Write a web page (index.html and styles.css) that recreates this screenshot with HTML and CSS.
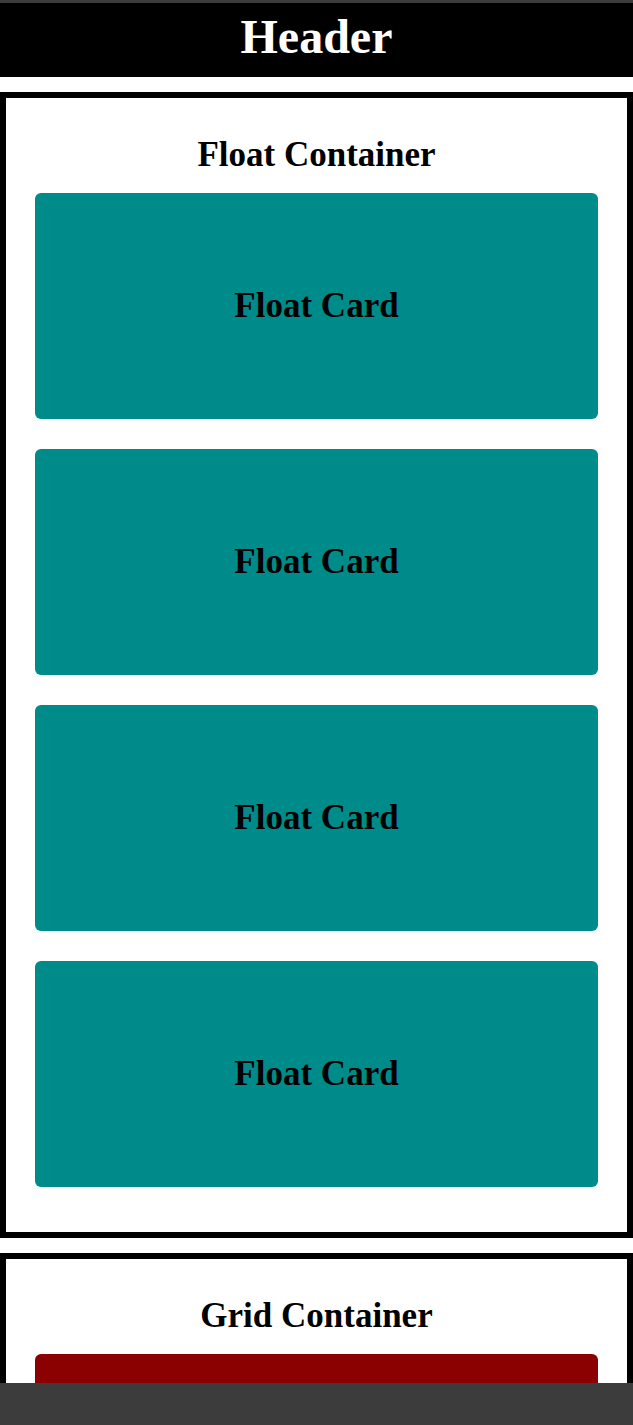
FILE: index.html
```html
<!DOCTYPE html>
<html lang="en">
<head>
<meta charset="utf-8">
<title>Layout</title>
<link rel="stylesheet" href="styles.css">
</head>
<body>
<div class="topbar"></div>
<header class="header"><h1 class="header-title">Header</h1></header>
<section class="box float-box">
  <h2 class="box-title">Float Container</h2>
  <div class="card teal">Float Card</div>
  <div class="card teal">Float Card</div>
  <div class="card teal">Float Card</div>
  <div class="card teal">Float Card</div>
</section>
<section class="box grid-box">
  <h2 class="box-title">Grid Container</h2>
  <div class="card red"></div>
</section>
<div class="bottombar"></div>
</body>
</html>
```

FILE: styles.css
```css
html, body {
  margin: 0;
  padding: 0;
  background: #ffffff;
}
body {
  font-family: "Liberation Serif", "Times New Roman", serif;
  font-weight: bold;
  color: #000;
}
.topbar {
  height: 3px;
  background: #3c3c3c;
}
.header {
  height: 73.5px;
  box-sizing: border-box;
  padding-bottom: 6px;
  background: #000;
  display: flex;
  align-items: center;
  justify-content: center;
}
.header-title {
  margin: 0;
  color: #fff;
  font-size: 48px;
  line-height: 1;
  font-weight: bold;
}
.box {
  border: 6.5px solid #000;
  margin-top: 15px;
  padding: 37px 29px 45px;
}
.box-title {
  margin: 0 0 19px;
  text-align: center;
  font-size: 35px;
  line-height: 39px;
  font-weight: bold;
}
.card {
  height: 226px;
  border-radius: 6px;
  display: flex;
  align-items: center;
  justify-content: center;
  font-size: 35px;
  margin-bottom: 30px;
  color: #000;
}
.card:last-child {
  margin-bottom: 0;
}
.teal {
  background: #008b8b;
}
.red {
  background: #8b0000;
}
.bottombar {
  position: fixed;
  left: 0;
  right: 0;
  bottom: 0;
  height: 42.5px;
  background: #3c3c3c;
}
```
